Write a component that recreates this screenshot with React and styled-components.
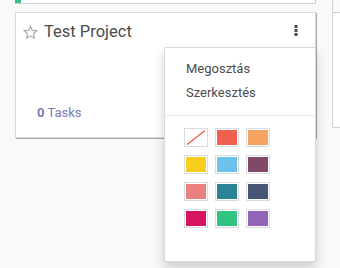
import React from 'react';
import styled, { createGlobalStyle } from 'styled-components';

const GlobalStyle = createGlobalStyle`
  html, body {
    margin: 0;
    padding: 0;
    background: #f9f9f9;
    font-family: Roboto, "Noto Sans", sans-serif;
    overflow: hidden;
  }
`;

const Board = styled.div`
  display: flex;
  gap: 16px;
  padding-left: 15px;
  width: 340px;
  height: 268px;
  box-sizing: border-box;
  overflow: hidden;
`;

const Column = styled.div`
  display: flex;
  flex-direction: column;
  width: ${p => p.$width}px;
  flex-shrink: 0;
`;

const StubCard = styled.div`
  position: relative;
  height: 3px;
  background: #fff;
  border-right: 1px solid #cfd2d6;
  border-bottom: 1px solid #cfd2d6;
  margin-bottom: 8px;
`;

const ColorTag = styled.div`
  width: 6px;
  height: 3px;
  background: #30c381;
`;

const Card = styled.div`
  position: relative;
  height: 115px;
  background: #fff;
  border: 1px solid #dadada;
  box-shadow: 1px 1px 0 #a4a7b0;
  padding: 9px 10px 0 7px;
  display: flex;
  flex-direction: column;
  justify-content: space-between;
`;

const Header = styled.div`
  display: flex;
  align-items: flex-start;
`;

const StarIcon = styled.svg`
  width: 15px;
  height: 15px;
  margin-top: 3px;
  margin-right: 6px;
  flex-shrink: 0;
`;

const Title = styled.div`
  font-size: 16.5px;
  line-height: 20px;
  color: #4c4c4c;
  flex: 1;
`;

const DotsIcon = styled.svg`
  width: 4px;
  height: 11px;
  margin-top: 3px;
  margin-right: 7px;
`;

const Footer = styled.div`
  padding-left: 14px;
  padding-bottom: 15px;
  font-size: 13px;
  line-height: 18px;
  color: #7c7bad;
  b {
    font-weight: 700;
  }
`;

const Menu = styled.div`
  position: absolute;
  top: 34px;
  right: -1px;
  width: 150px;
  height: 204px;
  background: #fff;
  border: 1px solid rgba(0, 0, 0, 0.15);
  border-radius: 2px;
  box-shadow: 0 6px 12px rgba(0, 0, 0, 0.175);
  padding-top: 9px;
  box-sizing: content-box;
`;

const MenuItem = styled.div`
  padding: 3px 21px;
  font-size: 13px;
  line-height: 18px;
  color: #4c4c4c;
`;

const Divider = styled.div`
  height: 1px;
  background: #e5e5e5;
  margin: 10px 0 12px;
`;

const Swatches = styled.div`
  display: grid;
  grid-template-columns: repeat(3, 24px);
  grid-auto-rows: 19px;
  column-gap: 7px;
  row-gap: 8px;
  padding-left: 19px;
`;

const Swatch = styled.div`
  box-sizing: border-box;
  border: 1px solid #d9dce1;
  padding: 1px;
  background: #fff;
  div {
    width: 100%;
    height: 100%;
    background: ${p => p.$color};
  }
  svg {
    display: block;
    width: 100%;
    height: 100%;
  }
`;

const NeighbourCard = styled.div`
  height: 128px;
  background: #fff;
  border-left: 1px solid #cfd2d6;
  border-bottom: 1px solid #cfd2d6;
  box-sizing: border-box;
`;

const NeighbourHead = styled.div`
  height: 12px;
  border-bottom: 1px solid #cfd2d6;
  background: #f9f9f9;
`;

const colors = [
  null, '#f06050', '#f4a460',
  '#f7cd1f', '#6cc1ed', '#814968',
  '#eb7e7f', '#2c8397', '#475577',
  '#d6145f', '#30c381', '#9365b8',
];

export default function App() {
  return (
    <>
      <GlobalStyle />
      <Board>
        <Column $width={301}>
          <StubCard><ColorTag /></StubCard>
          <Card>
            <Header>
              <StarIcon viewBox="0 0 24 24">
                <polygon
                  points="12,2 14.9,8.6 22,9.3 16.6,14 18.2,21 12,17.3 5.8,21 7.4,14 2,9.3 9.1,8.6"
                  fill="none"
                  stroke="#a8a8a8"
                  strokeWidth="1.8"
                  strokeLinejoin="miter"
                />
              </StarIcon>
              <Title>Test Project</Title>
              <DotsIcon viewBox="0 0 4 11">
                <rect x="0.5" y="0" width="3" height="3" fill="#4a4a4a" />
                <rect x="0.5" y="4" width="3" height="3" fill="#4a4a4a" />
                <rect x="0.5" y="8" width="3" height="3" fill="#4a4a4a" />
              </DotsIcon>
            </Header>
            <Footer><b>0</b> Tasks</Footer>
            <Menu>
              <MenuItem>Megosztás</MenuItem>
              <MenuItem>Szerkesztés</MenuItem>
              <Divider />
              <Swatches>
                {colors.map((c, i) => (
                  <Swatch key={i} $color={c}>
                    {c ? <div /> : (
                      <svg viewBox="0 0 20 15" preserveAspectRatio="none">
                        <line x1="1" y1="14.5" x2="19" y2="0.5" stroke="#f06050" strokeWidth="1.4" />
                      </svg>
                    )}
                  </Swatch>
                ))}
              </Swatches>
            </Menu>
          </Card>
        </Column>
        <Column $width={40}>
          <NeighbourCard><NeighbourHead /></NeighbourCard>
        </Column>
      </Board>
    </>
  );
}
